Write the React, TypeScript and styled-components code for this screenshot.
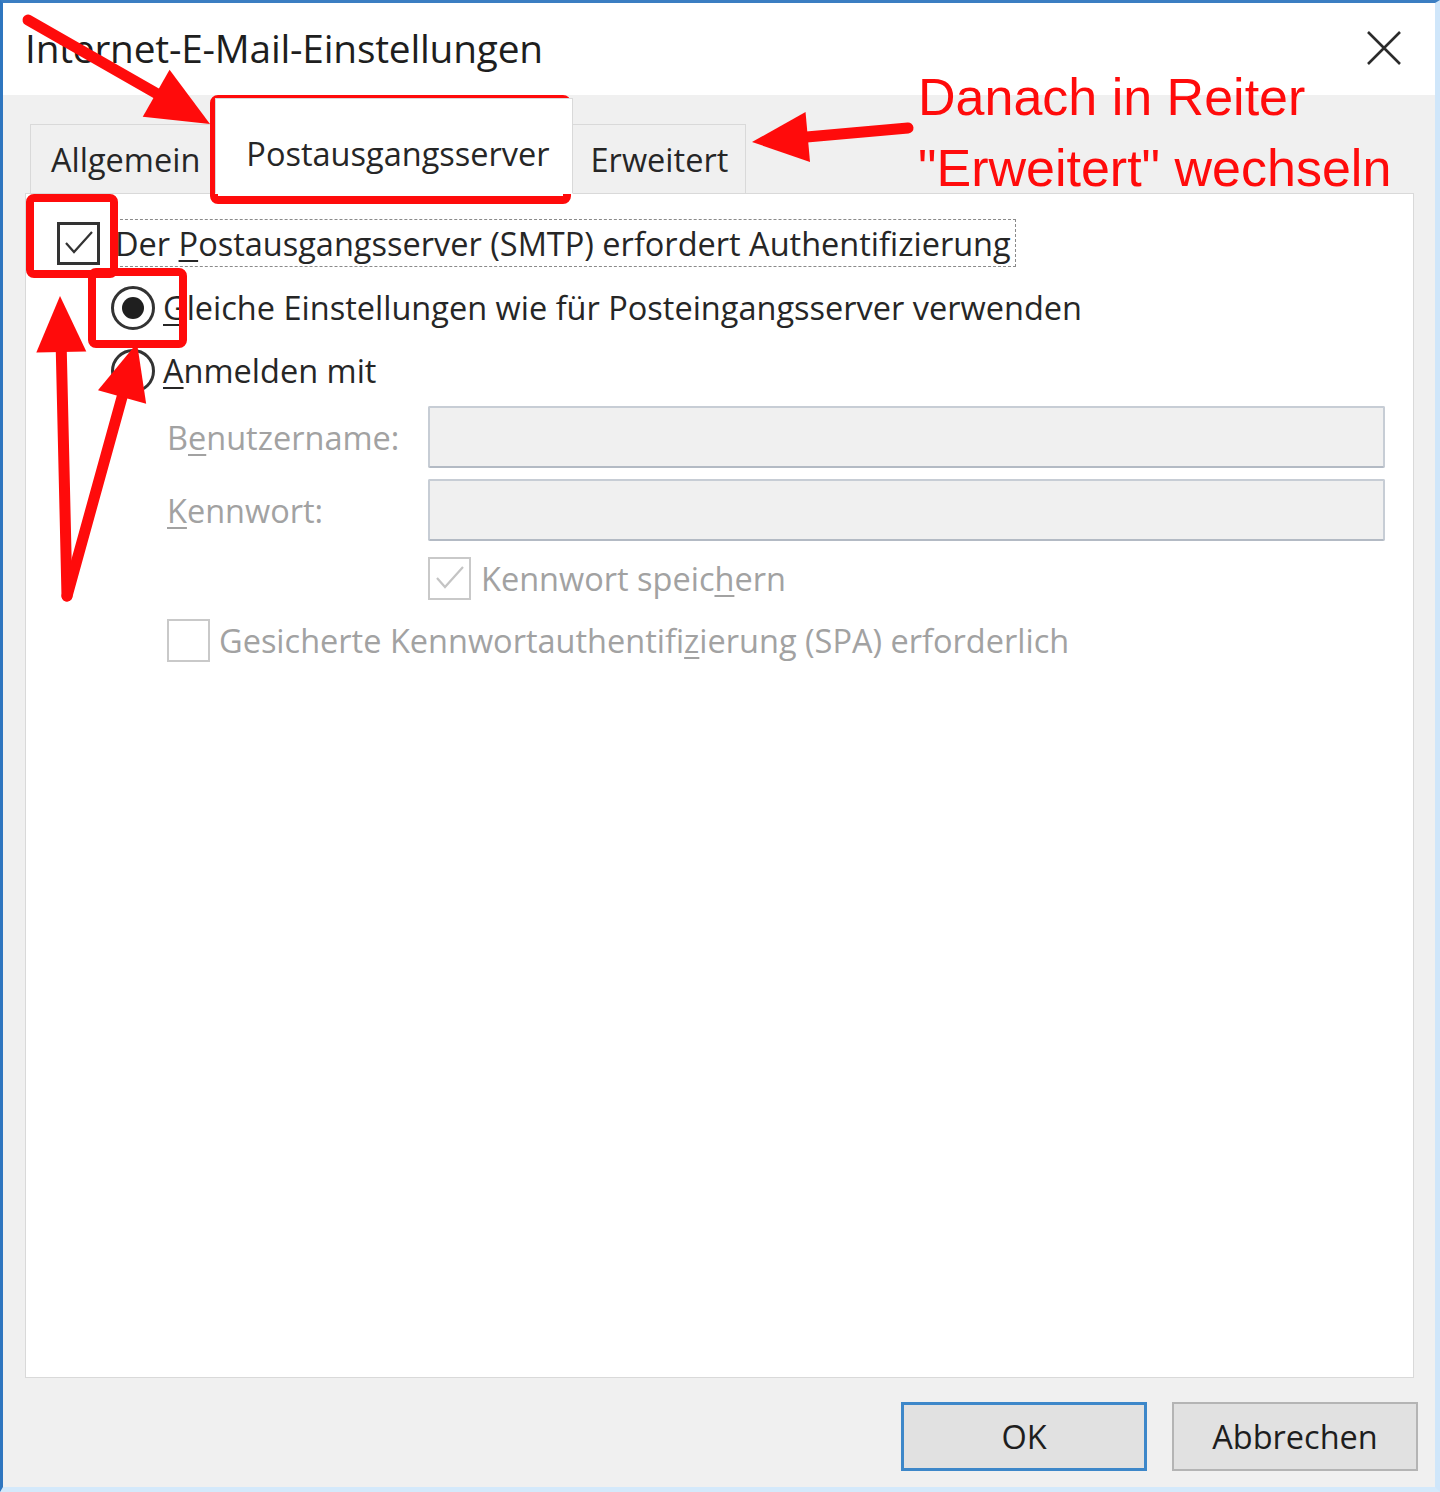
import styled, { createGlobalStyle } from "styled-components"

const GlobalStyle = createGlobalStyle`
    html, body {
        margin: 0;
        padding: 0;
    }

    body {
        background: #f0f0f0;
        font-family: "Open Sans", "Noto Sans", sans-serif;
    }

    * {
        box-sizing: border-box;
    }
`

const Stage = styled.div`
    position: relative;
    width: 1440px;
    height: 1492px;
    overflow: hidden;
`

const Window = styled.div`
    width: 100%;
    height: 100%;
    display: flex;
    flex-direction: column;
    background: #f0f0f0;
    border-top: 3px solid #3b7ec2;
    border-left: 3px solid #2f76bf;
    border-right: 5px solid #cfe6fa;
    border-bottom: 5px solid #d4e9fb;
    color: #262626;
`

const TitleBar = styled.header`
    height: 92px;
    flex-shrink: 0;
    background: #fff;
    display: flex;
    align-items: center;
    justify-content: space-between;
    padding: 0 32px 2px 22px;
`

const Title = styled.h1`
    margin: 0;
    font-size: 38.8px;
    font-weight: 400;
    color: #1e1e1e;
    letter-spacing: -0.2px;
`

const CloseButton = styled.button`
    width: 38px;
    height: 38px;
    padding: 0;
    border: none;
    background: transparent;
    display: flex;
    align-items: center;
    justify-content: center;
`

const Body = styled.div`
    flex: 1;
    display: flex;
    flex-direction: column;
    padding: 0 21px 0 22px;
`

const TabStrip = styled.div`
    height: 98px;
    flex-shrink: 0;
    display: flex;
    align-items: flex-end;
    padding-left: 5px;
`

const Tab = styled.div<{ $active?: boolean }>`
    position: relative;
    z-index: ${p => (p.$active ? 1 : 0)};
    height: ${p => (p.$active ? 96 : 70)}px;
    margin: 0 ${p => (p.$active ? -3 : 0)}px -1px;
    padding: ${p => (p.$active ? "14px 22px 0 30px" : "0 17px 0 20px")};
    display: flex;
    align-items: center;
    background: ${p => (p.$active ? "#fff" : "#f0f0f0")};
    border: 1px solid #d9d9d9;
    border-bottom-color: ${p => (p.$active ? "#fff" : "#d9d9d9")};
    font-size: 32.5px;
    color: #262626;
    white-space: nowrap;
`

const Panel = styled.section`
    flex: 1;
    background: #fff;
    border: 1px solid #d9d9d9;
    padding: 25px 28px 0 31px;
    display: flex;
    flex-direction: column;
`

const Row = styled.label<{ $indent?: number; $gap?: number; $top?: number; $muted?: boolean }>`
    display: flex;
    align-items: center;
    margin: ${p => p.$top ?? 0}px 0 0 ${p => p.$indent ?? 0}px;
    gap: ${p => p.$gap ?? 10}px;
    font-size: 32.5px;
    color: ${p => (p.$muted ? "#a2a2a2" : "#262626")};
    white-space: nowrap;
`

const FocusLabel = styled.span`
    height: 48px;
    display: flex;
    align-items: center;
    padding: 0 4px 0 4px;
    border: 1px dashed #8a8a8a;
`

const Box = styled.span<{ $disabled?: boolean }>`
    width: 43px;
    height: 43px;
    flex-shrink: 0;
    display: flex;
    align-items: center;
    justify-content: center;
    background: #fff;
    border: ${p => (p.$disabled ? "2px solid #c9c9c9" : "3px solid #333")};
`

const Radio = styled.span<{ $checked?: boolean }>`
    width: 44px;
    height: 44px;
    flex-shrink: 0;
    border-radius: 50%;
    border: 3px solid #333;
    background: #fff;
    display: flex;
    align-items: center;
    justify-content: center;

    &::after {
        content: "";
        display: ${p => (p.$checked ? "block" : "none")};
        width: 22px;
        height: 22px;
        border-radius: 50%;
        background: #1f1f1f;
    }
`

const Key = styled.span`
    text-decoration: underline;
    text-underline-offset: 4px;
    text-decoration-thickness: 2px;
`

const CredentialGrid = styled.div`
    display: grid;
    grid-template-columns: 261px 1fr;
    grid-template-rows: 62px 62px 52px;
    row-gap: 11px;
    margin: 13px 0 0 110px;
`

const Muted = styled.span`
    display: flex;
    align-items: center;
    font-size: 32.5px;
    color: #a2a2a2;
    white-space: nowrap;
`

const Field = styled.div`
    height: 62px;
    background: #f0f0f0;
    border: 2px solid #c7cdd5;
    border-bottom-color: #b3bac4;
    border-radius: 2px;
`

const GridRow = styled(Row)`
    grid-column: 2;
`

const Footer = styled.footer`
    flex-shrink: 0;
    display: flex;
    justify-content: flex-end;
    gap: 25px;
    padding: 24px 17px 16px 0;
`

const Button = styled.button<{ $default?: boolean }>`
    width: 246px;
    height: 69px;
    padding: 0;
    font-family: inherit;
    font-size: 32.5px;
    color: #1e1e1e;
    background: #e1e1e1;
    border: ${p => (p.$default ? "3px solid #3d87c9" : "2px solid #b4b4b4")};
`

const Annotations = styled.svg`
    position: absolute;
    inset: 0;
    pointer-events: none;
`

const Note = styled.div`
    position: absolute;
    left: 918px;
    top: 62px;
    font-family: "Liberation Sans", Arial, sans-serif;
    font-size: 52px;
    line-height: 71px;
    color: #ff0b0b;
    white-space: nowrap;
`

const RED = "#ff0b0b"

function Check({ color }: { color: string }) {
    return (
        <svg width="34" height="34" viewBox="0 0 34 34">
            <polyline points="4,17 12,26 30,6" fill="none" stroke={color} strokeWidth="2.2" />
        </svg>
    )
}

function Arrow({ from, tip, head = 62, half = 27 }: { from: [number, number]; tip: [number, number]; head?: number; half?: number }) {
    const dx = tip[0] - from[0]
    const dy = tip[1] - from[1]
    const len = Math.hypot(dx, dy)
    const ux = dx / len
    const uy = dy / len
    const bx = tip[0] - ux * head
    const by = tip[1] - uy * head
    const pts = `${tip[0]},${tip[1]} ${bx - uy * half},${by + ux * half} ${bx + uy * half},${by - ux * half}`
    return (
        <g>
            <line x1={from[0]} y1={from[1]} x2={bx + ux * 4} y2={by + uy * 4} stroke={RED} strokeWidth="11" strokeLinecap="round" />
            <polygon points={pts} fill={RED} />
        </g>
    )
}

export default function App() {
    return (
        <>
            <GlobalStyle />
            <Stage>
                <Window>
                    <TitleBar>
                        <Title>Internet-E-Mail-Einstellungen</Title>
                        <CloseButton aria-label="Schließen">
                            <svg width="36" height="36" viewBox="0 0 36 36">
                                <path d="M2 2 L34 34 M34 2 L2 34" stroke="#2b2b2b" strokeWidth="2.6" />
                            </svg>
                        </CloseButton>
                    </TitleBar>

                    <Body>
                        <TabStrip>
                            <Tab>Allgemein</Tab>
                            <Tab $active>Postausgangsserver</Tab>
                            <Tab>Erweitert</Tab>
                        </TabStrip>

                        <Panel>
                            <Row>
                                <Box><Check color="#333" /></Box>
                                <FocusLabel>
                                    <span>Der <Key>P</Key>ostausgangsserver (SMTP) erfordert Authentifizierung</span>
                                </FocusLabel>
                            </Row>

                            <Row $indent={54} $gap={8} $top={18}>
                                <Radio $checked />
                                <span><Key>G</Key>leiche Einstellungen wie für Posteingangsserver verwenden</span>
                            </Row>

                            <Row $indent={54} $gap={8} $top={18}>
                                <Radio />
                                <span><Key>A</Key>nmelden mit</span>
                            </Row>

                            <CredentialGrid>
                                <Muted>B<Key>e</Key>nutzername:</Muted>
                                <Field />
                                <Muted><Key>K</Key>ennwort:</Muted>
                                <Field />
                                <GridRow $muted>
                                    <Box $disabled><Check color="#c4c4c4" /></Box>
                                    <span>Kennwort speic<Key>h</Key>ern</span>
                                </GridRow>
                            </CredentialGrid>

                            <Row $indent={110} $gap={9} $top={14} $muted>
                                <Box $disabled />
                                <span>Gesicherte Kennwortauthentifi<Key>z</Key>ierung (SPA) erforderlich</span>
                            </Row>
                        </Panel>
                    </Body>

                    <Footer>
                        <Button $default>OK</Button>
                        <Button>Abbrechen</Button>
                    </Footer>
                </Window>

                <Annotations width="1440" height="1492" viewBox="0 0 1440 1492">
                    <rect x="214" y="99" width="353" height="101" rx="4" fill="none" stroke={RED} strokeWidth="8" />
                    <rect x="30" y="198" width="84" height="76" rx="4" fill="none" stroke={RED} strokeWidth="8" />
                    <rect x="92" y="272" width="91" height="72" rx="4" fill="none" stroke={RED} strokeWidth="8" />
                    <Arrow from={[28, 20]} tip={[210, 124]} />
                    <Arrow from={[908, 128]} tip={[752, 142]} head={56} half={25} />
                    <Arrow from={[67, 596]} tip={[60, 296]} head={56} half={25} />
                    <Arrow from={[67, 596]} tip={[137, 343]} head={56} half={25} />
                </Annotations>

                <Note>
                    Danach in Reiter<br />
                    "Erweitert" wechseln
                </Note>
            </Stage>
        </>
    )
}
